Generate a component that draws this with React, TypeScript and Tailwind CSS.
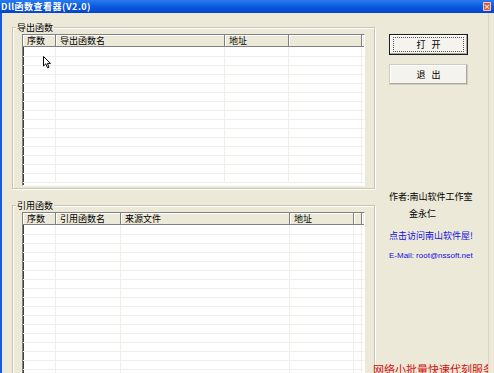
import React from 'react';

const font = { fontFamily: '"Noto Sans CJK SC", "DejaVu Sans", sans-serif' };

type Col = { title: string; w: number };

const exportCols: Col[] = [
    { title: '序数', w: 33 },
    { title: '导出函数名', w: 169 },
    { title: '地址', w: 64 },
    { title: '', w: 73 },
];

const importCols: Col[] = [
    { title: '序数', w: 33 },
    { title: '引用函数名', w: 65 },
    { title: '来源文件', w: 169 },
    { title: '地址', w: 64 },
    { title: '', w: 8 },
];

const ListView: React.FC<{ cols: Col[]; rows: number; className: string }> = ({ cols, rows, className }) => (
    <div className={`bg-white border-t border-l border-[#808080] border-r border-r-white border-b border-b-white shadow-[inset_1px_1px_0_#404040] overflow-hidden ${className}`}>
        <div className="flex h-[12px] bg-[#ece9d8] border-b border-[#808080]">
            {cols.map((c, i) => (
                <div
                    key={i}
                    style={{ width: c.w }}
                    className="shrink-0 h-full border-r border-[#808080] shadow-[inset_1px_1px_0_#ffffff] pl-[4px] text-[9px] leading-[12px] text-black whitespace-nowrap overflow-hidden"
                >
                    {c.title}
                </div>
            ))}
            <div className="flex-1 shadow-[inset_1px_1px_0_#ffffff]" />
        </div>
        {Array.from({ length: rows }).map((_, r) => (
            <div key={r} className={`flex ${r === 0 ? 'h-[10px]' : 'h-[9px]'}`}>
                {cols.map((c, i) => (
                    <div key={i} style={{ width: c.w }} className="shrink-0 h-full border-r border-b border-[#efeeea]" />
                ))}
                <div className="flex-1 border-b border-[#efeeea]" />
            </div>
        ))}
    </div>
);

const GroupBox: React.FC<{ label: string; className: string; children: React.ReactNode }> = ({ label, className, children }) => (
    <div className={`relative border border-[#c8c5b4] shadow-[inset_1px_1px_0_#ffffff,1px_1px_0_#ffffff] ${className}`}>
        <span className="absolute -top-[6px] left-[3px] px-[1px] bg-[#ece9d8] text-[9px] leading-[11px] text-black">{label}</span>
        {children}
    </div>
);

const App: React.FC = () => {
    return (
        <div className="relative w-[494px] h-[373px] overflow-hidden bg-[#ece9d8] flex flex-col" style={font}>
            {/* title bar */}
            <div className="h-[13px] shrink-0 flex items-center bg-gradient-to-b from-[#2a7bf0] via-[#0a5ae0] to-[#0644c8]">
                <span className="pl-[1px] text-[9px] font-bold text-white leading-none tracking-[0.5px]">Dll函数查看器(V2.0)</span>
                <div className="ml-auto mr-[3px] w-[8px] h-[9px] rounded-[1px] bg-[#d8593a] border border-white/70 flex items-center justify-center text-white text-[7px] leading-none font-bold">×</div>
            </div>

            <div className="flex-1 min-h-0 overflow-hidden flex border-l-[2px] border-[#1a5ad8] border-r border-r-[#d8d5c6] mr-[5px]">
                {/* left side */}
                <div className="w-[373px] shrink-0 pl-[10px] flex flex-col">
                    <GroupBox label="导出函数" className="mt-[14px] h-[162px] shrink-0 pl-[9px] pr-[9px] pt-[6px]">
                        <ListView cols={exportCols} rows={15} className="h-[152px]" />
                    </GroupBox>
                    <GroupBox label="引用函数" className="mt-[16px] h-[200px] shrink-0 pl-[9px] pr-[9px] pt-[6px]">
                        <ListView cols={importCols} rows={18} className="h-[200px]" />
                    </GroupBox>
                </div>

                {/* right side */}
                <div className="flex-1 flex flex-col pl-[14px]">
                    <button className="mt-[21px] w-[79px] h-[21px] border border-[#1c1c1c] bg-[#f4f3ee] shadow-[inset_-1px_-1px_0_#aca899,inset_1px_1px_0_#ffffff] flex items-center justify-center">
                        <span className="border border-dotted border-[#555] w-[71px] h-[15px] flex items-center justify-center text-[9px] text-black tracking-[6px] pl-[6px] leading-none">打开</span>
                    </button>
                    <button className="mt-[9px] w-[79px] h-[21px] border border-[#d0cdc0] bg-[#f4f3ee] shadow-[inset_-1px_-1px_0_#aca899,inset_1px_1px_0_#ffffff] flex items-center justify-center text-[9px] text-black tracking-[6px] pl-[6px] leading-none">
                        退出
                    </button>

                    <div className="mt-[106px] text-[9px] leading-[12px] text-black whitespace-nowrap">作者:南山软件工作室</div>
                    <div className="mt-[5px] pl-[20px] text-[9px] leading-[12px] text-black">金永仁</div>
                    <div className="mt-[10px] text-[9px] leading-[12px] text-[#1010e0] whitespace-nowrap">点击访问南山软件屋!</div>
                    <div className="mt-[8px] text-[8px] leading-[12px] text-[#1010e0] whitespace-nowrap" style={{ fontFamily: '"Liberation Sans", sans-serif' }}>E-Mail: root@nssoft.net</div>

                    <div className="mt-auto -ml-[16px] text-[11px] leading-[13px] text-[#d01010] whitespace-nowrap translate-y-[3px]">网络小批量快速代刻服务</div>
                </div>
            </div>

            {/* mouse pointer */}
            <svg className="absolute left-[43px] top-[56px]" width="9" height="13" viewBox="0 0 9 13">
                <path d="M0.5 0.5 L0.5 10 L2.8 7.8 L4.5 11.8 L6 11.2 L4.4 7.4 L7.5 7.4 Z" fill="#ffffff" stroke="#000000" strokeWidth="1" strokeLinejoin="miter" />
            </svg>
        </div>
    );
};

export default App;
